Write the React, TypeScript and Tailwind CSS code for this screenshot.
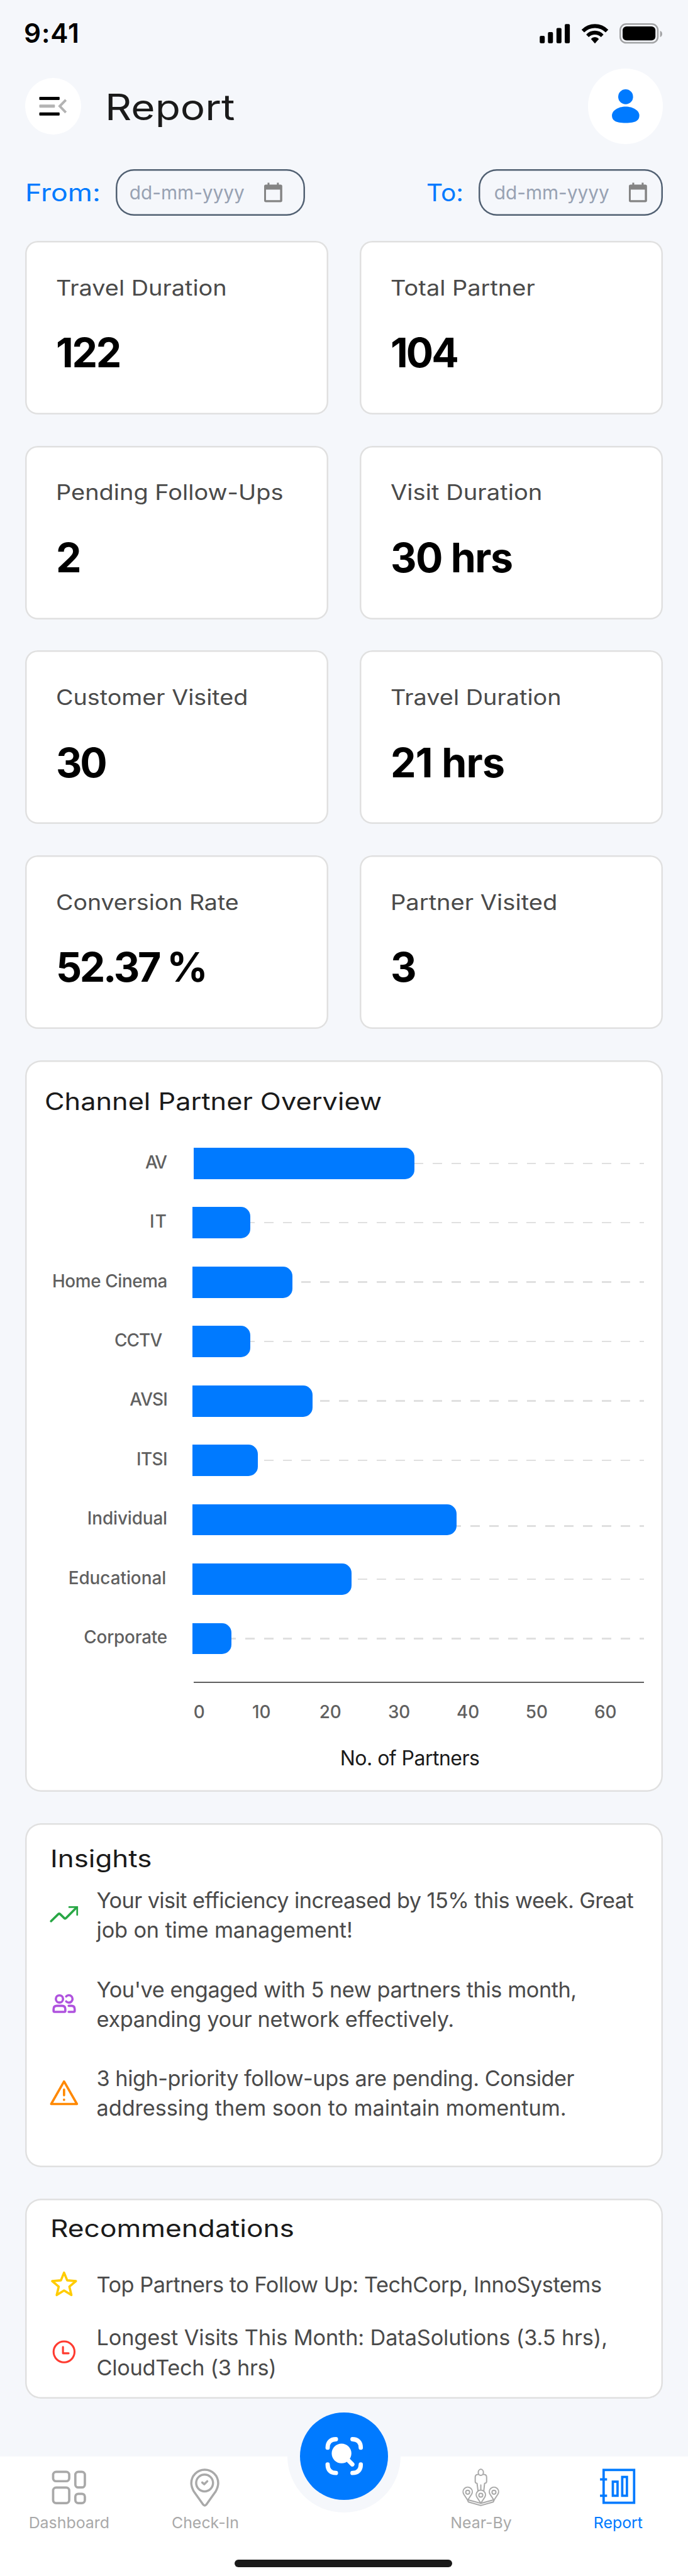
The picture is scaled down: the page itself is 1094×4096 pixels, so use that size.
import type { ReactNode } from "react";

const stats = [
  { label: "Travel Duration", labelCls: "inline-block origin-left scale-x-[1.128]", value: "122", cls: "tracking-[-0.034em]" },
  { label: "Total Partner", labelCls: "inline-block origin-left scale-x-[1.13]", value: "104", cls: "tracking-[-0.045em]" },
  { label: "Pending Follow-Ups", labelCls: "inline-block origin-left scale-x-[1.13]", value: "2", cls: "tracking-normal" },
  { label: "Visit Duration", labelCls: "inline-block origin-left scale-x-[1.137]", value: "30 hrs", cls: "tracking-[-0.023em]" },
  { label: "Customer Visited", labelCls: "inline-block origin-left scale-x-[1.123]", value: "30", cls: "tracking-[-0.05em]" },
  { label: "Travel Duration", labelCls: "inline-block origin-left scale-x-[1.128]", value: "21 hrs", cls: "tracking-[-0.012em]" },
  { label: "Conversion Rate", labelCls: "inline-block origin-left scale-x-[1.117]", value: "52.37 %", cls: "tracking-[-0.051em]" },
  { label: "Partner Visited", labelCls: "inline-block origin-left scale-x-[1.134]", value: "3", cls: "tracking-normal" },
];

const bars = [
  { label: "AV", labelCls: "w-90 tracking-[-0.09em]", bar: "ml-18 w-141", dash: "" },
  { label: "IT", labelCls: "w-91 tracking-[0.04em]", bar: "ml-16 w-37", dash: "" },
  { label: "Home Cinema", labelCls: "w-91 tracking-[-0.0135em]", bar: "ml-16 w-64", dash: "" },
  { label: "CCTV", labelCls: "w-87.5 tracking-[-0.03em]", bar: "ml-19.5 w-37", dash: "" },
  { label: "AVSI", labelCls: "w-91 tracking-[-0.03em]", bar: "ml-16 w-77", dash: "" },
  { label: "ITSI", labelCls: "w-91 tracking-[-0.02em]", bar: "ml-16 w-42", dash: "" },
  { label: "Individual", labelCls: "w-91 tracking-[-0.004em]", bar: "ml-16 w-169", dash: "mt-8" },
  { label: "Educational", labelCls: "w-90.25 tracking-[-0.001em]", bar: "ml-16.75 w-102", dash: "" },
  { label: "Corporate", labelCls: "w-91 tracking-[-0.0065em]", bar: "ml-16 w-25", dash: "" },
];

function StatusBar() {
  return (
    <div className="flex h-44 shrink-0 items-start justify-between pt-15 pl-15.25 pr-16">
      <span className="text-[42.3px] leading-[32.3px] font-semibold tracking-[0.022em] text-black">9:41</span>
      <svg className="h-13.5 w-79.5" viewBox="344.5 15 79.5 13.5">
        <rect x="345" y="23" width="3.2" height="4.75" rx="0.8" />
        <rect x="350.25" y="20.6" width="3.2" height="7.15" rx="0.8" />
        <rect x="355.7" y="18" width="3.2" height="9.75" rx="0.8" />
        <rect x="361" y="15.5" width="3.25" height="12.25" rx="0.8" />
        <g transform="translate(371.75 15.5)">
          <path d="M0 3.65A11.8 11.8 0 0 1 17.1 3.65L15.4 5.3A9.8 9.8 0 0 0 1.7 5.3Z" />
          <path d="M2.95 6.7A7.4 7.4 0 0 1 14.05 6.7L12.45 8.35A5.7 5.7 0 0 0 4.6 8.35Z" />
          <path d="M6 9.6A3.3 3.3 0 0 1 11.1 9.6L8.7 12.3Q8.55 12.5 8.4 12.3Z" />
        </g>
        <rect x="396.5" y="15.5" width="24" height="12" rx="3.8" fill="none" stroke="#a1a2a4" />
        <rect x="398" y="17" width="21" height="9" rx="2.5" />
        <path d="M422 19.8Q423.3 20.3 423.3 21.8T422 23.8Z" fill="#a1a2a4" />
      </svg>
    </div>
  );
}

function Header() {
  return (
    <header className="flex h-48 shrink-0 items-center pl-16 pr-16">
      <button className="flex h-36 w-36 items-center justify-center rounded-full bg-white">
        <svg className="h-20 w-20" viewBox="24 58 20 20">
          <rect x="25" y="62" width="13" height="2" rx="0.5" />
          <rect x="25" y="67" width="10" height="2" rx="0.5" fill="#b3b3b3" />
          <rect x="25" y="72" width="13" height="2" rx="0.5" />
          <path d="M42 64L38.1 68L42 72" fill="none" stroke="#b3b3b3" strokeWidth="1.6" />
        </svg>
      </button>
      <h1 className="mt-1 ml-15.25 origin-left scale-x-[1.145] text-[57.4px] leading-none text-[#1a1a1a]">Report</h1>
      <button className="ml-auto flex h-48 w-48 items-center justify-center rounded-full bg-white">
        <svg className="h-24 w-24" viewBox="388 56 24 24" fill="#007aff">
          <circle cx="400" cy="62" r="4.75" />
          <path d="M391.25 73.9C391.25 70.8 395.2 68.25 400 68.25S408.75 70.8 408.75 73.9S406.6 78.75 400 78.75S391.25 77 391.25 73.9Z" />
        </svg>
      </button>
    </header>
  );
}

function DateField({ box }: { box: string }) {
  return (
    <div className={box}>
      <span className="mt-1 text-[29.8px] leading-none text-[#98a2b3]">dd-mm-yyyy</span>
      <svg className="ml-12.25 h-13 w-12" viewBox="168.4 116.4 12 13" fill="#848484">
        <path d="M171 116.6h1.2v1.2h4.8v-1.2h1.2v1.2h1.1q1.1 0 1.1 1.1v9.1q0 1.1-1.1 1.1h-9.4q-1.1 0-1.1-1.1v-9.1q0-1.1 1.1-1.1h1.1zM170 121v6.8h9V121z" fillRule="evenodd" />
      </svg>
    </div>
  );
}

function DateRange() {
  return (
    <div className="mt-16 flex h-30 shrink-0 items-center pl-16 pr-16 text-[38.3px] leading-none text-[#007aff]">
      <div className="w-58 whitespace-nowrap">
        <span className="inline-block origin-left scale-x-[1.165]">From:</span>
      </div>
      <DateField box="flex h-30 w-121 items-center rounded-[29px] pl-8.75 shadow-[inset_0_0_0_2.49px_#516072]" />
      <div className="ml-auto w-33.5">
        <span className="inline-block origin-left scale-x-[1.06]">To:</span>
      </div>
      <DateField box="flex h-30 w-118 items-center rounded-[29px] pl-10 shadow-[inset_0_0_0_2.49px_#516072]" />
    </div>
  );
}

function StatGrid() {
  return (
    <div className="mx-16 mt-16 grid shrink-0 grid-cols-2 gap-20">
      {stats.map((s, i) => (
        <div key={i} className="flex h-111 flex-col rounded-[20px] bg-white pt-20 pl-19.75 whitespace-nowrap shadow-[inset_0_0_0_2.49px_#e0e0e0]">
          <div className="h-20 text-[33.6px] leading-[49.7px] text-[#4a4a4a]">
            <span className={s.labelCls}>{s.label}</span>
          </div>
          <div className="mt-16.5 text-[64.4px] leading-[77.5px] font-bold text-black">
            <span className={s.cls}>{s.value}</span>
          </div>
        </div>
      ))}
    </div>
  );
}

function Panel({ children, cls }: { children: ReactNode; cls: string }) {
  return (
    <section className="mx-16 mt-20 shrink-0 rounded-[25px] bg-white shadow-[inset_0_0_0_2.49px_#e0e0e0]">
      <div className={cls}>{children}</div>
    </section>
  );
}

function Chart() {
  return (
    <Panel cls="flex h-468 flex-col pt-16.75 pr-12">
      <h2 className="ml-12.75 h-20 self-start origin-left scale-x-[1.13] text-[38.3px] leading-[49.7px] whitespace-nowrap text-[#1a1a1a]">Channel Partner Overview</h2>
      <div className="mt-10.25">
        {bars.map((b) => (
          <div key={b.label} className="flex h-38 items-center">
            <div className="mb-1 text-right text-[27.85px] leading-none font-medium whitespace-nowrap text-[#606060]">
              <div className={b.labelCls}>{b.label}</div>
            </div>
            <div className={b.bar}>
              <div className="h-20 w-full rounded-r-[15px] bg-[#007aff]" />
            </div>
            <div className={b.dash + " h-1 flex-1 bg-[repeating-linear-gradient(to_left,#e0e0e0_0_7.46px,transparent_7.46px_22.38px,#e0e0e0_22.38px_29.84px)]"} />
          </div>
        ))}
      </div>
      <div className="mt-8.5 ml-108 h-1 bg-[#606060]" />
      <div className="mt-8.75 ml-107.75 flex h-20 items-center text-[27.85px] leading-none font-medium text-[#606060]">
        <span className="w-21.5">0</span>
        {["10", "20", "30", "40", "50", "60"].map((n) => (
          <span key={n} className="w-44 shrink-0 text-center">{n}</span>
        ))}
      </div>
      <div className="mt-9.25 ml-201.5 text-[32px] leading-[49.7px] tracking-[-0.0166em] text-[#1a1a1a]">No. of Partners</div>
    </Panel>
  );
}

function Item({ icon, lines, cls }: { icon: ReactNode; lines: [string, string][]; cls: string }) {
  return (
    <div className={cls}>
      <svg className="h-20 w-20 shrink-0" viewBox="0 0 20 20" fill="none" strokeLinecap="round" strokeLinejoin="round">
        {icon}
      </svg>
      <div className="ml-10.75 text-[34.3px] leading-[47.25px] whitespace-nowrap text-[#4a4a4a]">
        {lines.map(([t, c]) => (
          <div key={t} className={c}>{t}</div>
        ))}
      </div>
    </div>
  );
}

function Insights() {
  return (
    <Panel cls="flex h-220 flex-col pt-12.75 pl-15">
      <h2 className="ml-1.25 origin-left scale-x-[1.145] self-start text-[38.3px] leading-[49.7px] text-[#1a1a1a]">Insights</h2>
      <div className="mt-7 flex flex-col gap-19">
        <Item
          cls="flex h-38 items-center"
          icon={
            <g stroke="#28a745" strokeWidth="1.45">
              <path d="M1.7 14L6.3 9.5Q6.9 8.9 7.5 9.5L10.1 12Q10.7 12.6 11.3 12L18 5.2" />
              <path d="M13.3 5H18.4V10" strokeWidth="1.1" strokeLinejoin="miter" />
            </g>
          }
          lines={[
            ["Your visit efficiency increased by 15% this week. Great", "tracking-[-0.0169em]"],
            ["job on time management!", "tracking-[-0.0042em]"],
          ]}
        />
        <Item
          cls="flex h-38 items-center"
          icon={
            <g stroke="#af52de" strokeWidth="1.45">
              <circle cx="7.05" cy="6.6" r="2.3" />
              <path d="M11.35 5A2.35 2.35 0 1 1 11.35 8.2" />
              <path d="M3.3 14.3V13.1Q3.3 11 5.4 11H8.7Q10.8 11 10.8 13.1V14.3Q10.8 14.9 10.2 14.9H3.9Q3.3 14.9 3.3 14.3Z" />
              <path d="M12.95 11H14.7Q16.8 11 16.8 13.1V14.3Q16.8 14.9 16.2 14.9H12.95" />
            </g>
          }
          lines={[
            ["You've engaged with 5 new partners this month,", "tracking-[-0.0129em]"],
            ["expanding your network effectively.", "tracking-[-0.0097em]"],
          ]}
        />
        <Item
          cls="flex h-38 items-center"
          icon={
            <g stroke="#ff8800" strokeWidth="1.45">
              <path d="M10 2.3L18.25 16.7H1.75Z" />
              <path d="M10 7.5V11.1M10 13.9V14.1" />
            </g>
          }
          lines={[
            ["3 high-priority follow-ups are pending. Consider", "tracking-[-0.0142em]"],
            ["addressing them soon to maintain momentum.", "tracking-[-0.0018em]"],
          ]}
        />
      </div>
    </Panel>
  );
}

function Recommendations() {
  return (
    <Panel cls="flex h-128 flex-col pt-9.5 pl-15">
      <h2 className="ml-1.25 origin-left scale-x-[1.155] self-start text-[38.3px] leading-[49.7px] text-[#1a1a1a]">Recommendations</h2>
      <Item
        cls="mt-15.5 flex h-20 items-center"
        icon={
          <path stroke="#ffcc00" strokeWidth="1.45" d="M10 2.3L12 7.2L17.6 7.7L13.4 11.2L14.7 16.6L10 13.7L5.3 16.6L6.6 11.2L2.4 7.7L8 7.2Z" />
        }
        lines={[["Top Partners to Follow Up: TechCorp, InnoSystems", "tracking-[-0.0139em]"]]}
      />
      <Item
        cls="mt-14.5 flex h-38 items-center"
        icon={
          <g stroke="#ff3b30" strokeWidth="1.25">
            <circle cx="10" cy="9.5" r="6.7" />
            <path d="M9.3 6.4V10.4H12.9" />
          </g>
        }
        lines={[
          ["Longest Visits This Month: DataSolutions (3.5 hrs),", "tracking-[-0.0037em]"],
          ["CloudTech (3 hrs)", "tracking-[-0.009em]"],
        ]}
      />
    </Panel>
  );
}

function NavItem({ label, cls, viewBox, children }: { label: string; cls: string; viewBox: string; children: ReactNode }) {
  return (
    <div className={cls}>
      <svg className="h-26 w-26" viewBox={viewBox} fill="none" stroke="currentColor">
        {children}
      </svg>
      <span className="mt-2.5 text-[24.9px] leading-[34.8px]">{label}</span>
    </div>
  );
}

function BottomNav() {
  return (
    <nav className="relative mt-auto h-76.5 shrink-0 bg-white">
      <div className="absolute -top-36 left-184 flex h-72 w-72 items-center justify-center rounded-full bg-[#f5f7fb]">
        <div className="flex h-56 w-56 items-center justify-center rounded-full bg-[#007aff]">
          <svg className="h-26 w-26" viewBox="207 1558 26 26" fill="none" stroke="#fff" strokeWidth="2.75" strokeLinecap="round">
            <path d="M209.4 1565.6C209.4 1562 211.4 1560.2 214.7 1560.2M225.3 1560.2C228.6 1560.2 230.6 1562 230.6 1565.6M209.4 1576.4C209.4 1580 211.4 1581.8 214.7 1581.8M225.3 1581.8C228.6 1581.8 230.6 1580 230.6 1576.4" />
            <circle cx="218.3" cy="1569.3" r="6.3" fill="#fff" stroke="none" />
            <path d="M221 1572L225.2 1576.3" />
          </svg>
        </div>
      </div>
      <div className="flex h-54 pt-7">
        <NavItem label="Dashboard" cls="flex w-88.5 flex-col items-center text-[#a9a9a9]" viewBox="31.25 1578 26 26">
          <g strokeWidth="1.5">
            <rect x="33.85" y="1580.95" width="10.3" height="6" rx="1.9" />
            <rect x="33.85" y="1591" width="10.3" height="9.95" rx="1.9" />
            <rect x="48.05" y="1580.95" width="6.1" height="10" rx="1.9" />
            <rect x="48.05" y="1595" width="6.1" height="5.95" rx="1.9" />
          </g>
        </NavItem>
        <NavItem label="Check-In" cls="flex w-86 flex-col items-center text-[#a9a9a9]" viewBox="118.5 1578 26 26">
          <g strokeLinejoin="round" strokeLinecap="round" strokeWidth="1.4">
            <path d="M131.2 1579.6A8.6 8.6 0 0 0 122.6 1588.2C122.6 1590.6 123.3 1591.8 124.2 1593.5L130.2 1601.9Q131.2 1603.1 132.2 1601.9L138.2 1593.5C139.1 1591.8 139.8 1590.6 139.8 1588.2A8.6 8.6 0 0 0 131.2 1579.6Z" />
            <circle cx="131.1" cy="1588.1" r="5.4" />
            <path d="M129.6 1587.8L130.9 1588.9L132.8 1587" />
          </g>
        </NavItem>
        <NavItem label="Near-By" cls="ml-90.5 flex w-86 flex-col items-center text-[#a9a9a9]" viewBox="295 1578 26 26">
          <g strokeWidth="0.8" strokeLinejoin="round" strokeLinecap="round">
            <ellipse cx="307.7" cy="1581.3" rx="1.65" ry="1.95" />
            <path d="M306.3 1582.6H305.8Q304.1 1582.7 304.1 1584.4V1587.2Q304.1 1588.3 305.3 1588.4L305.9 1593.1M309.1 1582.6H309.7Q311.4 1582.7 311.4 1584.4V1587.2Q311.4 1588.3 310.1 1588.4L309.6 1593.1M307.7 1589.4V1592.7" />
            <path d="M299.3 1599.1L296.8 1595.3A2.95 2.95 0 1 1 301.8 1595.3Z" />
            <path d="M316.1 1599.1L313.6 1595.3A2.95 2.95 0 1 1 318.6 1595.3Z" />
            <path d="M307.7 1601L305.2 1597.2A2.95 2.95 0 1 1 310.2 1597.2Z" />
            <circle cx="299.3" cy="1594" r="1.25" />
            <circle cx="316.1" cy="1594" r="1.25" />
            <circle cx="307.7" cy="1595.9" r="1.25" />
            <path d="M299.7 1598.9L307.7 1601.1L315.7 1598.9M299.3 1599.2L299.7 1600.2L307.7 1602.5L315.7 1600.2L316.1 1599.2" />
          </g>
        </NavItem>
        <NavItem label="Report" cls="flex w-89.5 flex-col items-center text-[#007aff]" viewBox="382.75 1578 26 26">
          <g strokeWidth="1.5">
            <rect x="386.3" y="1579.75" width="19.5" height="21" />
            <path d="M384 1585.75H388.5M384 1596.25H388.5" />
            <rect x="392.2" y="1587.25" width="3" height="9" />
            <rect x="398.2" y="1584.25" width="3" height="12" />
          </g>
        </NavItem>
      </div>
      <div className="mt-12 ml-150 h-5 w-139 rounded-full bg-[#1a1a1a]" />
    </nav>
  );
}

export default function App() {
  return (
    <main className="flex h-[4096px] w-[1094px] flex-col overflow-hidden bg-[#f5f7fb] font-['Inter',sans-serif] [--spacing:2.4864px]">
      <StatusBar />
      <Header />
      <DateRange />
      <StatGrid />
      <Chart />
      <Insights />
      <Recommendations />
      <BottomNav />
    </main>
  );
}
